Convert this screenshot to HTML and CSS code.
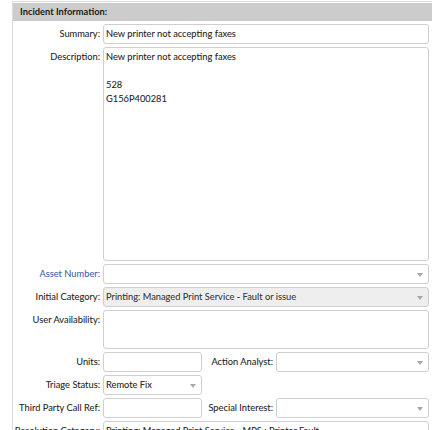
FILE: index.html
```html
<!DOCTYPE html>
<html>
<head>
<meta charset="utf-8">
<link rel="stylesheet" href="styles.css">
</head>
<body>
<div class="panel">
  <div class="header">Incident Information:</div>
  <div class="rows">
    <div class="row">
      <div class="label">Summary:</div>
      <div class="field input">New printer not accepting faxes</div>
    </div>
    <div class="row">
      <div class="label">Description:</div>
      <div class="field textarea desc">New printer not accepting faxes<br><br>528<br>G156P400281</div>
    </div>
    <div class="row">
      <div class="label blue">Asset Number:</div>
      <div class="field input select"><span class="arrow"></span></div>
    </div>
    <div class="row">
      <div class="label">Initial Category:</div>
      <div class="field input select disabled">Printing: Managed Print Service - Fault or issue<span class="arrow"></span></div>
    </div>
    <div class="row">
      <div class="label">User Availability:</div>
      <div class="field textarea avail"></div>
    </div>
    <div class="row">
      <div class="label">Units:</div>
      <div class="field input short"></div>
      <div class="label2">Action Analyst:</div>
      <div class="field input select"><span class="arrow"></span></div>
    </div>
    <div class="row">
      <div class="label">Triage Status:</div>
      <div class="field input select short">Remote Fix<span class="arrow"></span></div>
    </div>
    <div class="row">
      <div class="label">Third Party Call Ref:</div>
      <div class="field input short"></div>
      <div class="label2">Special Interest:</div>
      <div class="field input select"><span class="arrow"></span></div>
    </div>
    <div class="row">
      <div class="label">Resolution Category:</div>
      <div class="field input select">Printing: Managed Print Service - MPS : Printer Fault<span class="arrow"></span></div>
    </div>
  </div>
</div>
</body>
</html>
```
FILE: styles.css
```css
html, body {
  margin: 0;
  padding: 0;
  background: #ffffff;
  overflow: hidden;
}
body {
  font-family: "Lato", "Liberation Sans", sans-serif;
  font-size: 9.3px;
  color: #222222;
  -webkit-text-stroke: 0.06px;
}
.panel {
  margin-top: 1px;
  margin-left: 12px;
  width: 440px;
  height: 460px;
  border: 1px solid #dcdcdc;
  padding: 1px 0 0 0;
  box-sizing: border-box;
}
.header {
  height: 18px;
  line-height: 18px;
  background: #cccccc;
  font-weight: bold;
  color: #1a1a1a;
  padding-left: 7px;
  -webkit-text-stroke: 0;
}
.rows {
  display: flex;
  flex-direction: column;
  gap: 3px;
  padding-top: 3px;
}
.row {
  display: flex;
  align-items: flex-start;
}
.label {
  width: 87px;
  flex: none;
  text-align: right;
  padding-top: 4px;
  line-height: 12px;
  white-space: nowrap;
  margin-right: 3px;
}
.label2 {
  width: 71px;
  flex: none;
  text-align: right;
  padding-top: 4px;
  line-height: 12px;
  white-space: nowrap;
  margin-right: 3px;
}
.blue {
  color: #3b5ea6;
}
.field {
  box-sizing: border-box;
  border: 1px solid #cfcfcf;
  border-radius: 3px;
  background: #ffffff;
  width: 326px;
  flex: none;
  padding-left: 2px;
  position: relative;
  white-space: nowrap;
}
.input {
  height: 20px;
  line-height: 17px;
}
.textarea {
  padding-top: 2px;
  line-height: 14px;
}
.desc {
  height: 214px;
}
.avail {
  height: 39px;
}
.short {
  width: 99px;
}
.row .label2 + .field {
  width: 153px;
}
.disabled {
  background: #eeeeee;
  color: #333333;
}
.arrow {
  position: absolute;
  right: 5px;
  top: 8px;
  width: 0;
  height: 0;
  border-left: 3px solid transparent;
  border-right: 3px solid transparent;
  border-top: 4px solid #a8a8a8;
}
```
